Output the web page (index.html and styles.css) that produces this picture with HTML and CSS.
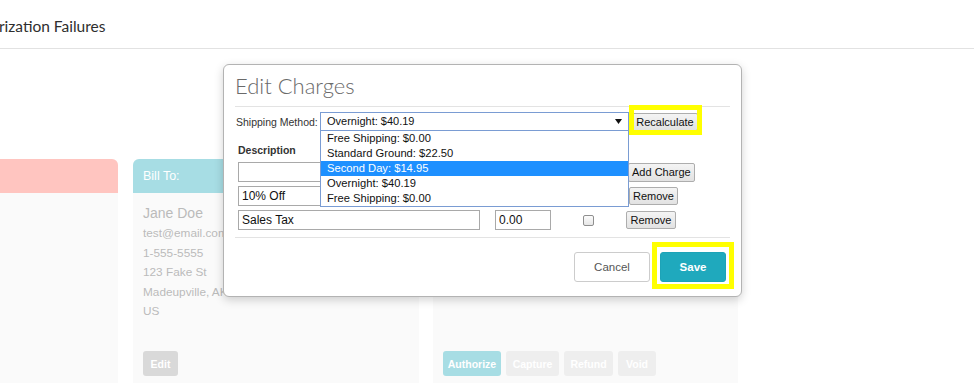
FILE: index.html
```html
<!DOCTYPE html>
<html lang="en">
<head>
    <meta charset="UTF-8">
    <meta name="viewport" content="width=device-width, initial-scale=1.0">
    <title>Authorization Failures</title>
    <link rel="stylesheet" href="styles.css">
</head>
<body>
    <header class="topbar">
        <h2 class="page-title">Authorization Failures</h2>
    </header>

    <main class="cards">
        <section class="card card-red">
            <div class="card-head"></div>
            <div class="card-body"></div>
        </section>

        <section class="card card-bill">
            <div class="card-head">Bill To:</div>
            <div class="card-body">
                <div class="name">Jane Doe</div>
                <div class="line">test@email.com</div>
                <div class="line">1-555-5555</div>
                <div class="line">123 Fake St</div>
                <div class="line">Madeupville, AK 99999</div>
                <div class="line">US</div>
                <div class="card-actions">
                    <button class="btn-flat btn-grey">Edit</button>
                </div>
            </div>
        </section>

        <section class="card card-pay">
            <div class="card-head">Payment:</div>
            <div class="card-body">
                <div class="line">Visa ending in 1111</div>
                <div class="line">Status: Failed</div>
                <div class="card-actions">
                    <button class="btn-flat btn-teal">Authorize</button>
                    <button class="btn-flat btn-light">Capture</button>
                    <button class="btn-flat btn-light">Refund</button>
                    <button class="btn-flat btn-light">Void</button>
                </div>
            </div>
        </section>
    </main>

    <!-- modal -->
    <div class="modal">
        <div class="modal-head">
            <h3 class="modal-title">Edit Charges</h3>
        </div>
        <div class="modal-body">
            <div class="ship-row">
                <label class="ship-label">Shipping Method:</label>
                <div class="select">
                    Overnight: $40.19
                    <svg class="select-arrow" width="7" height="5" viewBox="0 0 7 5"><polygon points="0,0 7,0 3.5,5" fill="#111"/></svg>
                    <ul class="options">
                        <li>Free Shipping: $0.00</li>
                        <li>Standard Ground: $22.50</li>
                        <li class="active">Second Day: $14.95</li>
                        <li>Overnight: $40.19</li>
                        <li>Free Shipping: $0.00</li>
                    </ul>
                </div>
                <button class="btn-sys recalc">Recalculate</button>
            </div>

            <div class="charges-head">
                <span>Description</span>
                <span>Amount</span>
                <span>Taxable</span>
                <span></span>
            </div>
            <div class="charge-row">
                <input class="field field-desc" type="text" value="">
                <input class="field field-amt" type="text" value="">
                <span class="check"></span>
                <button class="btn-sys btn-add">Add Charge</button>
            </div>
            <div class="charge-row">
                <input class="field field-desc" type="text" value="10% Off">
                <input class="field field-amt" type="text" value="-4.02">
                <span class="check"></span>
                <button class="btn-sys btn-remove">Remove</button>
            </div>
            <div class="charge-row">
                <input class="field field-desc" type="text" value="Sales Tax">
                <input class="field field-amt" type="text" value="0.00">
                <span class="check"></span>
                <button class="btn-sys btn-wide">Remove</button>
            </div>
        </div>
        <div class="modal-foot">
            <button class="btn-cancel">Cancel</button>
            <button class="btn-save">Save</button>
        </div>
    </div>
</body>
</html>
```

FILE: styles.css
```css
body {
    margin: 0;
    font-family: "Liberation Sans", Arial, sans-serif;
    background: #fff;
    overflow: hidden;
    height: 100vh;
    position: relative;
}

.topbar {
    height: 49px;
    border-bottom: 1px solid #e2e2e2;
    display: flex;
    align-items: center;
    padding-top: 3px;
    box-sizing: border-box;
}

.page-title {
    margin: 0 0 0 -43px;
    font-family: Lato, "Open Sans", sans-serif;
    font-weight: 400;
    font-size: 15.5px;
    color: #2e2e2e;
    white-space: nowrap;
}

.cards {
    display: flex;
    gap: 15px;
    margin: 110px 0 0 -168px;
    align-items: flex-start;
}

.card {
    flex: 0 0 286px;
    background: #fafafa;
    border-radius: 6px 6px 0 0;
    overflow: hidden;
}

.card-pay {
    flex-basis: 305px;
    margin-left: -1px;
}

.card-head {
    height: 34px;
    padding: 0 10px;
    display: flex;
    align-items: center;
    color: #fff;
    font-size: 12.5px;
}

.card-red .card-head {
    background: #ffc5c0;
}

.card-bill .card-head,
.card-pay .card-head {
    background: #a7dde4;
}

.card-body {
    height: 193px;
    box-sizing: border-box;
    padding: 11px 10px 10px;
    display: flex;
    flex-direction: column;
    color: #bbb;
    white-space: nowrap;
}

.name {
    font-size: 14px;
    line-height: 19px;
}

.line {
    font-size: 11.8px;
    line-height: 19.5px;
}

.name + .line {
    margin-top: 1px;
}

.card-actions {
    margin-top: auto;
    display: flex;
    gap: 5px;
}

.btn-flat {
    height: 25px;
    border: none;
    border-radius: 3px;
    color: #fff;
    font-family: inherit;
    font-weight: bold;
    font-size: 10.5px;
    padding: 0;
}

.btn-grey {
    background: #d9d9d9;
    width: 35px;
}

.btn-teal {
    background: #a7dde4;
    width: 58px;
}

.btn-light {
    background: #eeeeee;
    width: 53px;
}

.btn-light:nth-child(3) {
    width: 49px;
}

.btn-light:nth-child(4) {
    width: 38px;
}

/* modal */
.modal {
    position: absolute;
    left: 223px;
    top: 64px;
    width: 519px;
    box-sizing: border-box;
    background: #fff;
    border: 1px solid #b3b3b3;
    border-radius: 6px;
    box-shadow: 0 3px 10px rgba(0, 0, 0, 0.18);
}

.modal-head {
    margin: 0 11px;
    height: 42px;
    box-sizing: border-box;
    border-bottom: 1px solid #e3e3e3;
}

.modal-title {
    margin: 0;
    font-family: Lato, "Open Sans", sans-serif;
    font-weight: 300;
    font-size: 22px;
    line-height: 41px;
    color: #6a6a6a;
}

.modal-body {
    padding: 5px 11px 0 12px;
    font-size: 11px;
    color: #222;
}

.ship-row {
    display: flex;
    align-items: center;
    height: 19px;
}

.ship-label {
    flex: 0 0 84px;
    font-size: 10.5px;
    color: #333;
}

.select {
    position: relative;
    width: 309px;
    height: 19px;
    box-sizing: border-box;
    border: 1px solid #7a9cd3;
    padding-left: 6px;
    font-size: 11px;
    line-height: 17px;
    color: #111;
}

.select-arrow {
    position: absolute;
    right: 6px;
    top: 6px;
}

.options {
    position: absolute;
    left: -1px;
    top: 100%;
    width: 309px;
    box-sizing: border-box;
    margin: 0;
    padding: 0;
    list-style: none;
    background: #fff;
    border: 1px solid #7a9cd3;
    z-index: 2;
    font-size: 11.2px;
}

.options li {
    height: 15px;
    line-height: 15px;
    padding-left: 6px;
}

.options li.active {
    background: #1e90ff;
    color: #fff;
}

.btn-sys {
    height: 18px;
    padding: 0 3px;
    border: 1px solid #adadad;
    border-radius: 2px;
    background: linear-gradient(#f4f4f4, #e2e2e2);
    font-family: inherit;
    font-size: 11px;
    color: #111;
    justify-self: start;
}

.recalc {
    position: relative;
    margin-left: 3px;
    width: 66px;
}

.recalc::after {
    content: "";
    position: absolute;
    top: -9px;
    right: -5px;
    bottom: -5px;
    left: -4px;
    border: 5px solid #ffff00;
}

.charges-head,
.charge-row {
    display: grid;
    grid-template-columns: 257px 81px 49px auto;
    align-items: center;
    margin-left: 2px;
}

.charges-head {
    margin-top: 11px;
    height: 15px;
    font-size: 10.5px;
    font-weight: bold;
    color: #333;
}

.charge-row {
    height: 20px;
    margin-top: 4px;
}

.charges-head + .charge-row {
    margin-top: 5px;
}

.field {
    box-sizing: border-box;
    height: 20px;
    border: 1px solid #a9a9a9;
    padding: 0 3px;
    font-family: inherit;
    font-size: 12px;
    color: #111;
    outline: none;
}

.field-desc {
    width: 242px;
}

.field-amt {
    width: 56px;
}

.check {
    width: 11px;
    height: 11px;
    margin-left: 7px;
    box-sizing: border-box;
    border: 1px solid #8f8f8f;
    border-radius: 2px;
    background: linear-gradient(#fcfcfc, #e6e6e6);
}

.btn-add {
    height: 19px;
    margin-left: 3px;
}

.btn-remove {
    margin-left: 4px;
}

.btn-wide {
    width: 50px;
    margin-left: 1px;
}

.modal-foot {
    margin: 7px 11px 0;
    border-top: 1px solid #e3e3e3;
    padding: 14px 4px 14px;
    display: flex;
    justify-content: flex-end;
    gap: 10px;
}

.btn-cancel,
.btn-save {
    height: 30px;
    border-radius: 3px;
    font-family: inherit;
    font-size: 11.5px;
    padding: 0;
}

.btn-cancel {
    width: 76px;
    background: #fff;
    border: 1px solid #ccc;
    color: #555;
}

.btn-save {
    position: relative;
    width: 66px;
    background: #1fa9bd;
    border: 1px solid #1da3b7;
    color: #fff;
    font-weight: bold;
}

.btn-save::after {
    content: "";
    position: absolute;
    top: -11px;
    right: -9px;
    bottom: -8px;
    left: -9px;
    border: 5px solid #ffff00;
}
```
